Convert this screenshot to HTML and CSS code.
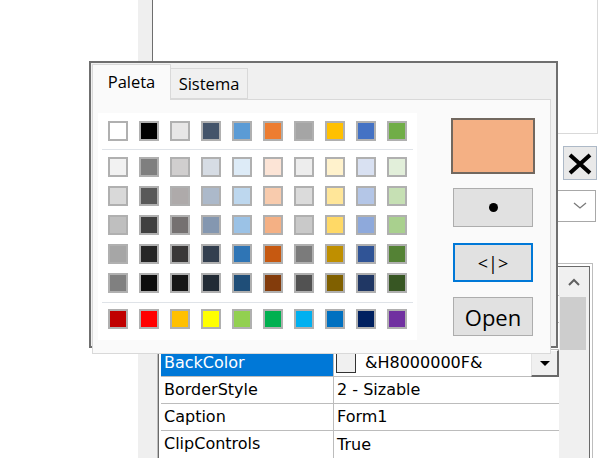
FILE: index.html
```html
<!DOCTYPE html>
<html lang="es">
  <head>
    <meta charset="UTF-8" />
    <title>Propiedades - BackColor</title>
    <link rel="stylesheet" href="styles.css">
  </head>
  <body>
    <div class="ide">
      <div class="blank"></div>
      <div class="strip"></div>
      <div class="props">
        <div class="objlist"></div>
        <div class="tools">
          <button class="close-btn">
            <svg width="32" height="32" viewBox="0 0 32 32">
              <path d="M6 8 L26 26 M26 8 L6 26" stroke="#000" stroke-width="4" fill="none" />
            </svg>
          </button>
          <div class="combo">
            <svg width="14" height="8" viewBox="0 0 14 8">
              <polyline points="1,1 7,6 13,1" stroke="#7a7a7a" stroke-width="1.3" fill="none" />
            </svg>
          </div>
        </div>
        <div class="grid-wrap">
          <div class="gutter"></div>
          <div class="grid-frame">
            <div class="grid">
              <div class="rows">
                <div class="row"><div class="name">(Name)</div><div class="value">Form1</div></div>
                <div class="row"><div class="name">Appearance</div><div class="value">1 - 3D</div></div>
                <div class="row"><div class="name">AutoRedraw</div><div class="value">False</div></div>
                <div class="row sel">
                  <div class="name">BackColor</div>
                  <div class="value">
                    <span class="chip"></span>&amp;H8000000F&amp;
                    <span class="drop"><span class="tri"></span></span>
                  </div>
                </div>
                <div class="row"><div class="name">BorderStyle</div><div class="value">2 - Sizable</div></div>
                <div class="row"><div class="name">Caption</div><div class="value">Form1</div></div>
                <div class="row last"><div class="name">ClipControls</div><div class="value">True</div></div>
              </div>
              <div class="scroll">
                <div class="sb-up">
                  <svg width="12" height="8" viewBox="0 0 12 8">
                    <polyline points="1,7 6,2 11,7" stroke="#606060" stroke-width="2" fill="none" />
                  </svg>
                </div>
                <div class="sb-thumb"></div>
              </div>
            </div>
          </div>
        </div>
      </div>
    </div>

    <div class="picker">
      <div class="tabs">
        <div class="tab active">Paleta</div>
        <div class="tab">Sistema</div>
      </div>
      <div class="page">
        <div class="palette">
          <div class="swatches" id="theme"></div>
          <div class="sep"></div>
          <div class="swatches shades" id="shades"></div>
          <div class="sep sep-low"></div>
          <div class="swatches" id="standard"></div>
        </div>
        <div class="side">
          <div class="preview"></div>
          <button class="btn"><span class="dot"></span></button>
          <button class="btn focus">&lt;|&gt;</button>
          <button class="btn open">Open</button>
        </div>
      </div>
    </div>

    <script>
      const themeColors = ["#ffffff", "#000000", "#e7e6e6", "#44546a", "#5b9bd5", "#ed7d31", "#a5a5a5", "#ffc000", "#4472c4", "#70ad47"];
      const shadeColors = [
        "#f2f2f2", "#7f7f7f", "#d0cece", "#d6dce4", "#ddebf7", "#fce4d6", "#ededed", "#fff2cc", "#d9e1f2", "#e2efda",
        "#d9d9d9", "#595959", "#aeaaaa", "#acb9ca", "#bdd7ee", "#f8cbad", "#dbdbdb", "#ffe699", "#b4c6e7", "#c6e0b4",
        "#bfbfbf", "#404040", "#757171", "#8497b0", "#9bc2e6", "#f4b084", "#c9c9c9", "#ffd966", "#8ea9db", "#a9d08e",
        "#a6a6a6", "#262626", "#3a3838", "#333f4f", "#2f75b5", "#c65911", "#7b7b7b", "#bf8f00", "#305496", "#548235",
        "#808080", "#0d0d0d", "#161616", "#222b35", "#1f4e78", "#833c0c", "#525252", "#806000", "#203764", "#375623"
      ];
      const standardColors = ["#c00000", "#ff0000", "#ffc000", "#ffff00", "#92d050", "#00b050", "#00b0f0", "#0070c0", "#002060", "#7030a0"];

      function fill(id, colors) {
        let box = document.getElementById(id);
        colors.forEach((c) => {
          let s = document.createElement("div");
          s.className = "swatch";
          s.style.background = c;
          box.appendChild(s);
        });
      }

      fill("theme", themeColors);
      fill("shades", shadeColors);
      fill("standard", standardColors);
    </script>
  </body>
</html>
```

FILE: styles.css
```css
body {
  margin: 0;
  width: 600px;
  height: 458px;
  overflow: hidden;
  position: relative;
  background-color: #fff;
  font-family: "DejaVu Sans", sans-serif;
  font-size: 16px;
  color: #000;
}

/* properties window behind the picker */
.ide {
  display: flex;
  height: 458px;
}
.blank {
  width: 138px;
}
.strip {
  width: 14px;
  background-color: #efefef;
}
.props {
  flex: 1;
  display: flex;
  flex-direction: column;
  min-height: 0;
}
.objlist {
  flex-shrink: 0;
  height: 134px;
  box-sizing: border-box;
  margin-right: 2px;
  border-left: 1px solid #6e6e6e;
  border-right: 1px solid #d9d9d9;
  border-bottom: 1px solid #d9d9d9;
}
.tools {
  flex-shrink: 0;
  display: flex;
  flex-direction: column;
  align-items: flex-end;
  padding: 12px 3px 0 0;
}
.close-btn {
  width: 34px;
  height: 34px;
  box-sizing: border-box;
  padding: 0;
  display: flex;
  border: 1px solid #adb9c7;
  background-color: #e9e9e9;
}
.combo {
  align-self: stretch;
  height: 32px;
  margin: 10px 1px 0 8px;
  box-sizing: border-box;
  display: flex;
  align-items: center;
  justify-content: flex-end;
  padding-right: 8px;
  border: 1px solid #a8a8a8;
  background-color: #fff;
}

.grid-wrap {
  flex: 1;
  min-height: 0;
  overflow: hidden;
  display: flex;
  margin-top: 41px;
}
.gutter {
  width: 5px;
  background-color: #efefef;
}
.grid-frame {
  width: 436px;
  box-sizing: border-box;
  padding: 2px 2px 0 0;
  border: 1px solid #bdbdbd;
  border-bottom: none;
}
.grid {
  height: 100%;
  box-sizing: border-box;
  display: flex;
  border: 1px solid #6a6a6a;
  border-bottom: none;
}
.rows {
  width: 400px;
  flex-shrink: 0;
  box-sizing: border-box;
  padding: 2px 0 0 2px;
  background-color: #fff;
}
.row {
  display: flex;
  height: 27px;
  box-sizing: border-box;
  border-bottom: 1px solid #bcbcbc;
  line-height: 26px;
}
.row.last {
  border-bottom: none;
}
.name {
  width: 173px;
  box-sizing: border-box;
  padding-left: 3px;
  border-right: 1px solid #bcbcbc;
}
.value {
  flex: 1;
  display: flex;
  align-items: center;
  padding-left: 3px;
}
.sel .name {
  background-color: #0078d7;
  color: #fff;
}
.chip {
  width: 20px;
  height: 20px;
  box-sizing: border-box;
  margin: 0 9px 0 -1px;
  border: 1px solid #333;
  background-color: #f0f0f0;
}
.drop {
  align-self: flex-start;
  margin-left: auto;
  width: 28px;
  height: 27px;
  box-sizing: border-box;
  display: flex;
  align-items: center;
  justify-content: center;
  background-color: #f0f0f0;
  border-top: 1px solid #fff;
  border-left: 1px solid #e3e3e3;
  border-right: 2px solid #696969;
  border-bottom: 2px solid #696969;
}
.tri {
  width: 0;
  height: 0;
  border-left: 5px solid transparent;
  border-right: 5px solid transparent;
  border-top: 5px solid #000;
}
.scroll {
  width: 30px;
  display: flex;
  flex-direction: column;
  background-color: #f0f0f0;
}
.sb-up {
  height: 30px;
  display: flex;
  align-items: center;
  justify-content: center;
}
.sb-thumb {
  width: 26px;
  height: 53px;
  margin-left: 1px;
  background-color: #cdcdcd;
}

/* colour picker dropdown */
.picker {
  position: absolute;
  left: 89px;
  top: 61px;
  width: 469px;
  height: 287px;
  box-sizing: border-box;
  padding: 1px 5px 3px 1px;
  display: flex;
  flex-direction: column;
  border: 2px solid #6f6f6f;
  background-color: #f0f0f0;
  font-family: "Open Sans", sans-serif;
}
.tabs {
  display: flex;
  align-items: flex-start;
  height: 35px;
}
.tab {
  width: 77px;
  height: 31px;
  margin-top: 4px;
  box-sizing: border-box;
  text-align: center;
  font-size: 16.5px;
  line-height: 29px;
  border: 1px solid #d9d9d9;
  border-left: none;
  background-color: #f0f0f0;
}
.tab.active {
  position: relative;
  z-index: 1;
  width: 79px;
  height: 36px;
  margin-top: 0;
  line-height: 34px;
  border-left: 1px solid #d9d9d9;
  border-bottom: none;
  background-color: #fafafa;
}
.page {
  flex: 1;
  display: flex;
  align-items: flex-start;
  padding: 13px 5px;
  border: 1px solid #d9d9d9;
  background-color: #fafafa;
}
.palette {
  width: 319px;
  height: 227px;
  box-sizing: border-box;
  padding: 8px 0 0 10px;
  background-color: #fff;
}
.swatches {
  display: grid;
  grid-template-columns: repeat(10, 20px);
  column-gap: 11px;
}
.shades {
  row-gap: 9px;
}
.swatch {
  width: 20px;
  height: 20px;
  box-sizing: border-box;
  border: 2px solid #b0b0b0;
}
.sep {
  height: 1px;
  margin: 8px 4px 7px -6px;
  background-color: #dfe3e8;
}
.sep-low {
  margin-top: 9px;
  margin-bottom: 6px;
}
.side {
  width: 84px;
  margin-left: 34px;
  display: flex;
  flex-direction: column;
  align-items: center;
}
.preview {
  width: 84px;
  height: 56px;
  margin-top: 5px;
  box-sizing: border-box;
  border: 2px solid #72685f;
  background-color: #f4b084;
}
.btn {
  width: 80px;
  height: 39px;
  box-sizing: border-box;
  margin-top: 14px;
  padding: 0;
  display: flex;
  align-items: center;
  justify-content: center;
  border: 1px solid #adadad;
  background-color: #e1e1e1;
  font-family: "Open Sans", sans-serif;
  font-size: 18px;
  color: #000;
}
.btn.focus {
  margin-top: 16px;
  border: 2px solid #0078d7;
}
.btn.open {
  margin-top: 15px;
  font-size: 22px;
}
.dot {
  width: 9px;
  height: 9px;
  border-radius: 50%;
  background-color: #000;
}
```
